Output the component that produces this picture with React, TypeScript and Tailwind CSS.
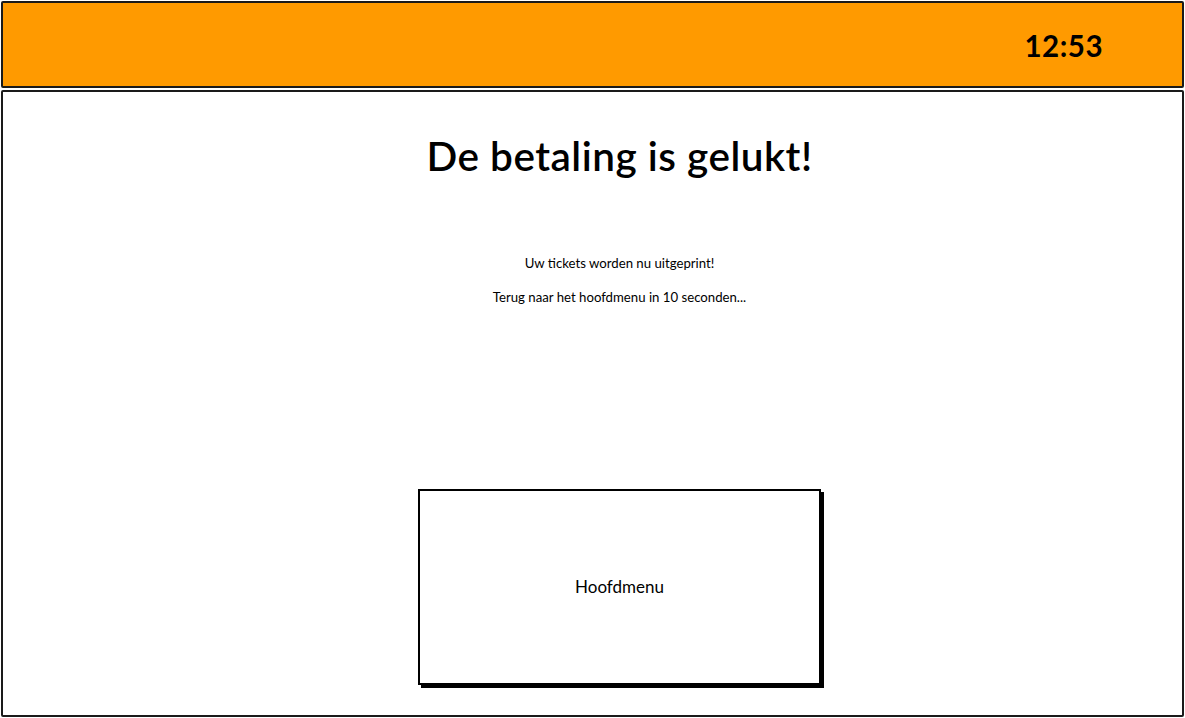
export default function App() {
  const font = { fontFamily: '"Lato", "Open Sans", sans-serif' };
  return (
    <div className="w-[1185px] h-[718px] bg-white flex flex-col overflow-hidden" style={font}>
      <div className="mx-[1px] mt-[1px] h-[87px] border-2 border-[#1a1a1a] bg-[#ff9a00] flex items-center justify-end pr-[79px] rounded-[2px]">
        <span className="text-[29.5px] font-bold text-black tracking-[0.5px] mt-[4px]">12:53</span>
      </div>
      <div className="mx-[1px] mt-[2px] mb-[1px] flex-1 border-2 border-[#1a1a1a] flex flex-col items-center pl-[54px] rounded-[2px]">
        <h1 className="mt-[39px] text-[40.5px] leading-[50px] font-semibold text-black tracking-[0.5px]">De betaling is gelukt!</h1>
        <p className="mt-[74px] text-[13.2px] leading-[16px] text-black">Uw tickets worden nu uitgeprint!</p>
        <p className="mt-[18px] text-[13.2px] leading-[16px] text-black">Terug naar het hoofdmenu in 10 seconden...</p>
        <div className="mt-[184px] w-[403px] h-[196px] border-2 border-black bg-white shadow-[3px_3px_0_0_#000] flex items-center justify-center">
          <span className="text-[17px] text-black">Hoofdmenu</span>
        </div>
      </div>
    </div>
  );
}
